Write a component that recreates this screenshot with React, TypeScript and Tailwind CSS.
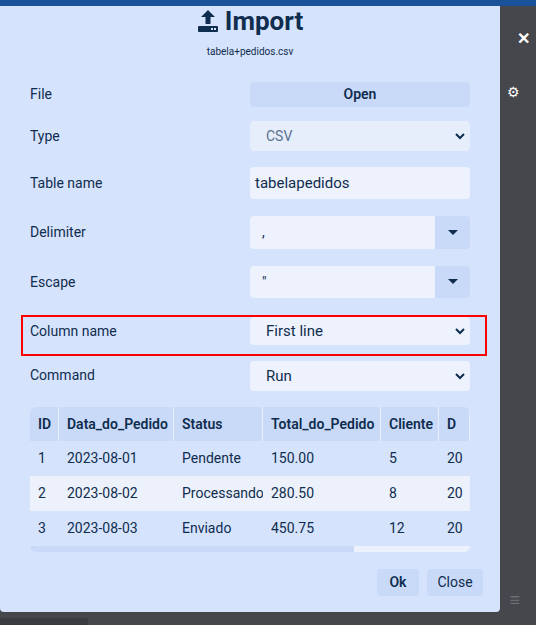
const rows = [
  ["1", "2023-08-01", "Pendente", "150.00", "5", "20"],
  ["2", "2023-08-02", "Processando", "280.50", "8", "20"],
  ["3", "2023-08-03", "Enviado", "450.75", "12", "20"],
];

function Chevron() {
  return (
    <svg width="12" height="12" viewBox="0 0 12 12" className="shrink-0">
      <path d="M2 4l4 4 4-4" stroke="#0f2d4f" strokeWidth="2" fill="none" />
    </svg>
  );
}

function Caret() {
  return (
    <svg width="10" height="6" viewBox="0 0 10 6">
      <path d="M0 0h10L5 5z" fill="#0f2d4f" />
    </svg>
  );
}

function Row({ label, children, h = "h-[49px]" }: { label: string; children: React.ReactNode; h?: string }) {
  return (
    <div className={`flex items-center ${h}`}>
      <div className="w-[220px] text-[14px]">{label}</div>
      <div className="w-[220px]">{children}</div>
    </div>
  );
}

export default function App() {
  return (
    <div
      className="relative w-[536px] h-[625px] bg-[#45474c] overflow-hidden text-[#0f2d4f]"
      style={{ fontFamily: "Roboto, 'Liberation Sans', sans-serif" }}
    >
      <div className="h-[6px] bg-[#1a5299]" />
      <div className="absolute right-[6px] top-[27px] text-white text-[16px] font-bold">✕</div>
      <div className="absolute right-[16px] top-[82px] text-white text-[14px]">⚙</div>
      <div className="absolute right-[16px] top-[586px] text-[#6b6e73] text-[18px]">≡</div>
      <div className="absolute left-0 top-[618px] w-[88px] h-[7px] bg-[#3a3c40]" />

      <div className="w-[500px] h-[606px] bg-[#d6e3fc] rounded-b-[4px] px-[30px] flex flex-col">
        <div className="flex items-center justify-center gap-[6px] h-[30px]">
          <svg width="22" height="24" viewBox="0 0 22 24">
            <path d="M11 1l7 7h-4.5v7h-5v-7H4z" fill="#0f2d4f" />
            <rect x="1" y="17" width="20" height="6" rx="1" fill="#0f2d4f" />
            <rect x="14" y="19" width="2" height="2" fill="#d6e3fc" />
            <rect x="17" y="19" width="2" height="2" fill="#d6e3fc" />
          </svg>
          <span className="text-[26px] font-bold leading-none">Import</span>
        </div>
        <div className="text-center text-[10px] mt-[8px]">tabela+pedidos.csv</div>

        <div className="mt-[20px]">
          <Row label="File" h="h-[30px]">
            <div className="h-[25px] rounded bg-[#c9daf8] flex items-center justify-center text-[14px] font-semibold">Open</div>
          </Row>
          <div className="h-[12px]" />
          <Row label="Type" h="h-[30px]">
            <div className="h-[30px] rounded bg-[#e6edfb] flex items-center justify-between pl-[16px] pr-[4px] text-[14px] text-[#5b7290]">
              CSV <Chevron />
            </div>
          </Row>
          <div className="h-[16px]" />
          <Row label="Table name" h="h-[32px]">
            <div className="h-[32px] rounded bg-[#edf2fc] flex items-center px-[5px] text-[15px]">tabelapedidos</div>
          </Row>
          <div className="h-[17px]" />
          <Row label="Delimiter" h="h-[33px]">
            <div className="h-[33px] flex rounded overflow-hidden">
              <div className="flex-1 bg-[#edf2fc] px-[12px] flex items-center text-[14px]">,</div>
              <div className="w-[35px] bg-[#c9daf8] flex items-center justify-center"><Caret /></div>
            </div>
          </Row>
          <div className="h-[17px]" />
          <Row label="Escape" h="h-[32px]">
            <div className="h-[32px] flex rounded overflow-hidden">
              <div className="flex-1 bg-[#edf2fc] px-[12px] flex items-start pt-[6px] text-[14px]">"</div>
              <div className="w-[35px] bg-[#c9daf8] flex items-center justify-center"><Caret /></div>
            </div>
          </Row>
          <div className="-mx-[9px] mt-[17px] border-[2px] border-[#ff0000] w-[466px] h-[41px] pl-[7px] pt-[0px]">
            <div className="flex items-start">
              <div className="w-[220px] text-[14px] pt-[4px]">Column name</div>
              <div className="w-[220px] h-[28px] rounded bg-[#edf2fc] flex items-center justify-between pl-[16px] pr-[4px] text-[15px]">
                First line <Chevron />
              </div>
            </div>
          </div>
          <div className="flex items-start mt-[5px]">
            <div className="w-[220px] text-[14px] pt-[4px]">Command</div>
            <div className="w-[220px] h-[30px] rounded bg-[#edf2fc] flex items-center justify-between pl-[16px] pr-[4px] text-[15px]">
              Run <Chevron />
            </div>
          </div>
        </div>

        <div className="mt-[16px] w-[440px] rounded-[6px] overflow-hidden text-[14px]">
          <div className="flex h-[34px] font-semibold whitespace-nowrap">
            {[["ID", "w-[29px]"], ["Data_do_Pedido", "w-[115px]"], ["Status", "w-[89px]"], ["Total_do_Pedido", "w-[118px]"], ["Cliente", "w-[58px]"], ["D", "w-[31px]"]].map(([t, w]) => (
              <div key={t} className={`${w} bg-[#c9daf8] border-r border-[#e6edfb] flex items-center px-[8px] overflow-hidden`}>{t}</div>
            ))}
          </div>
          {rows.map((r, i) => (
            <div key={i} className={`flex h-[35px] whitespace-nowrap ${i === 1 ? "bg-[#ecf1fb]" : "bg-[#d6e3fc]"}`}>
              {r.map((c, j) => (
                <div key={j} className={`${["w-[29px]", "w-[115px]", "w-[89px]", "w-[118px]", "w-[58px]", "w-[31px]"][j]} flex items-center px-[8px] overflow-hidden`}>{c}</div>
              ))}
            </div>
          ))}
          <div className="flex h-[6px]">
            <div className="w-[324px] bg-[#c9daf8]" />
            <div className="flex-1 bg-[#ecf1fb]" />
          </div>
        </div>

        <div className="flex justify-end gap-[8px] mt-[17px] -mr-[13px]">
          <div className="w-[42px] h-[27px] rounded bg-[#c9daf8] flex items-center justify-center text-[14px] font-semibold">Ok</div>
          <div className="w-[56px] h-[27px] rounded bg-[#c9daf8] flex items-center justify-center text-[14px]">Close</div>
        </div>
      </div>
    </div>
  );
}
